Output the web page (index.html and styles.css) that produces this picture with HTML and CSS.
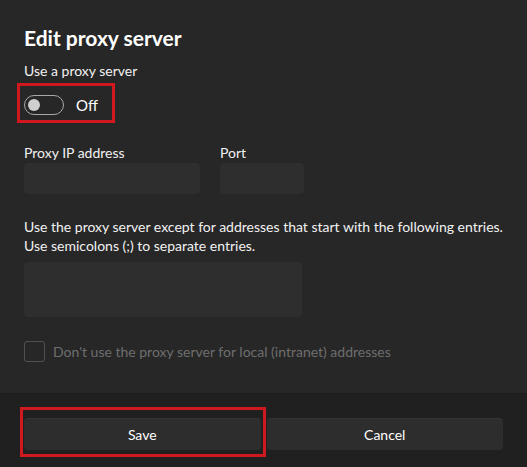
FILE: index.html
```html
<!DOCTYPE html>
<html lang="en">
<head>
    <meta charset="UTF-8">
    <meta name="viewport" content="width=device-width, initial-scale=1.0">
    <title>Edit proxy server</title>
    <link rel="stylesheet" href="styles.css">
</head>
<body>
    <div class="dialog">
        <div class="content">
            <h1>Edit proxy server</h1>
            <p class="label">Use a proxy server</p>
            <div class="toggle-row mark mark-toggle">
                <span class="toggle"><span class="knob"></span></span>
                <span class="toggle-text">Off</span>
            </div>

            <div class="fields">
                <div class="field field-ip">
                    <p class="label">Proxy IP address</p>
                    <div class="input"></div>
                </div>
                <div class="field field-port">
                    <p class="label">Port</p>
                    <div class="input"></div>
                </div>
            </div>

            <p class="hint">Use the proxy server except for addresses that start with the following entries.<br>Use semicolons (;) to separate entries.</p>
            <div class="input textarea"></div>

            <label class="check">
                <span class="box"></span>
                <span>Don't use the proxy server for local (intranet) addresses</span>
            </label>
        </div>

        <div class="footer">
            <div class="mark mark-save">
                <button>Save</button>
            </div>
            <button>Cancel</button>
        </div>
    </div>
</body>
</html>
```

FILE: styles.css
```css
body {
    margin: 0;
    background-color: #272727;
    color: #ffffff;
    font-family: "Segoe UI", Lato, sans-serif;
    font-size: 14px;
}
p {
    margin: 0;
}
.dialog {
    height: 467px;
    display: flex;
    flex-direction: column;
}
.content {
    flex: 1;
    padding: 24px 24px 0 24px;
}
h1 {
    margin: 0;
    font-size: 21px;
    font-weight: 700;
    line-height: 28px;
}
.label {
    line-height: 20px;
    color: #f2f2f2;
}
.content > .label {
    margin-top: 9px;
}

/* on/off switch */
.toggle-row {
    display: inline-flex;
    align-items: center;
    gap: 12px;
    margin-top: 14px;
}
.toggle {
    width: 35px;
    height: 18px;
    border: 1px solid #a8a8a8;
    border-radius: 10px;
    display: flex;
    align-items: center;
    padding-left: 3px;
    box-sizing: content-box;
}
.knob {
    width: 12px;
    height: 12px;
    border-radius: 50%;
    background-color: #cfcfcf;
}
.toggle-text {
    font-size: 15px;
}

/* red annotation frames */
.mark {
    position: relative;
}
.mark::after {
    content: '';
    position: absolute;
    border: 3px solid #d0191f;
}
.mark-toggle::after {
    left: -7px;
    right: -17px;
    top: -12px;
    bottom: -8px;
}
.mark-save::after {
    left: -4px;
    right: -5px;
    top: -11px;
    bottom: -7px;
}

.fields {
    display: flex;
    gap: 20px;
    margin-top: 28px;
}
.field-ip {
    width: 176px;
}
.field-port {
    width: 84px;
}
.input {
    height: 31px;
    background-color: #2e2e2e;
    border-radius: 4px;
}
.hint {
    margin-top: 23px;
    line-height: 19px;
    color: #f2f2f2;
}
.textarea {
    width: 278px;
    height: 55px;
    margin-top: 7px;
}
.check {
    display: flex;
    align-items: center;
    gap: 8px;
    margin-top: 24px;
    color: #6e6e6e;
}
.box {
    width: 19px;
    height: 19px;
    border: 1px solid #505050;
    border-radius: 3px;
}

.footer {
    height: 74px;
    box-sizing: border-box;
    background-color: #202020;
    border-top: 1px solid #1c1c1c;
    padding: 24px 24px 0 24px;
    display: grid;
    grid-template-columns: 1fr 1fr;
    gap: 6px;
    align-items: start;
}
button {
    width: 100%;
    height: 32px;
    font-family: inherit;
    font-size: 14px;
    color: #ffffff;
    background-color: #2d2d2d;
    border: none;
    border-top: 1px solid #353535;
    border-radius: 4px;
}
```
